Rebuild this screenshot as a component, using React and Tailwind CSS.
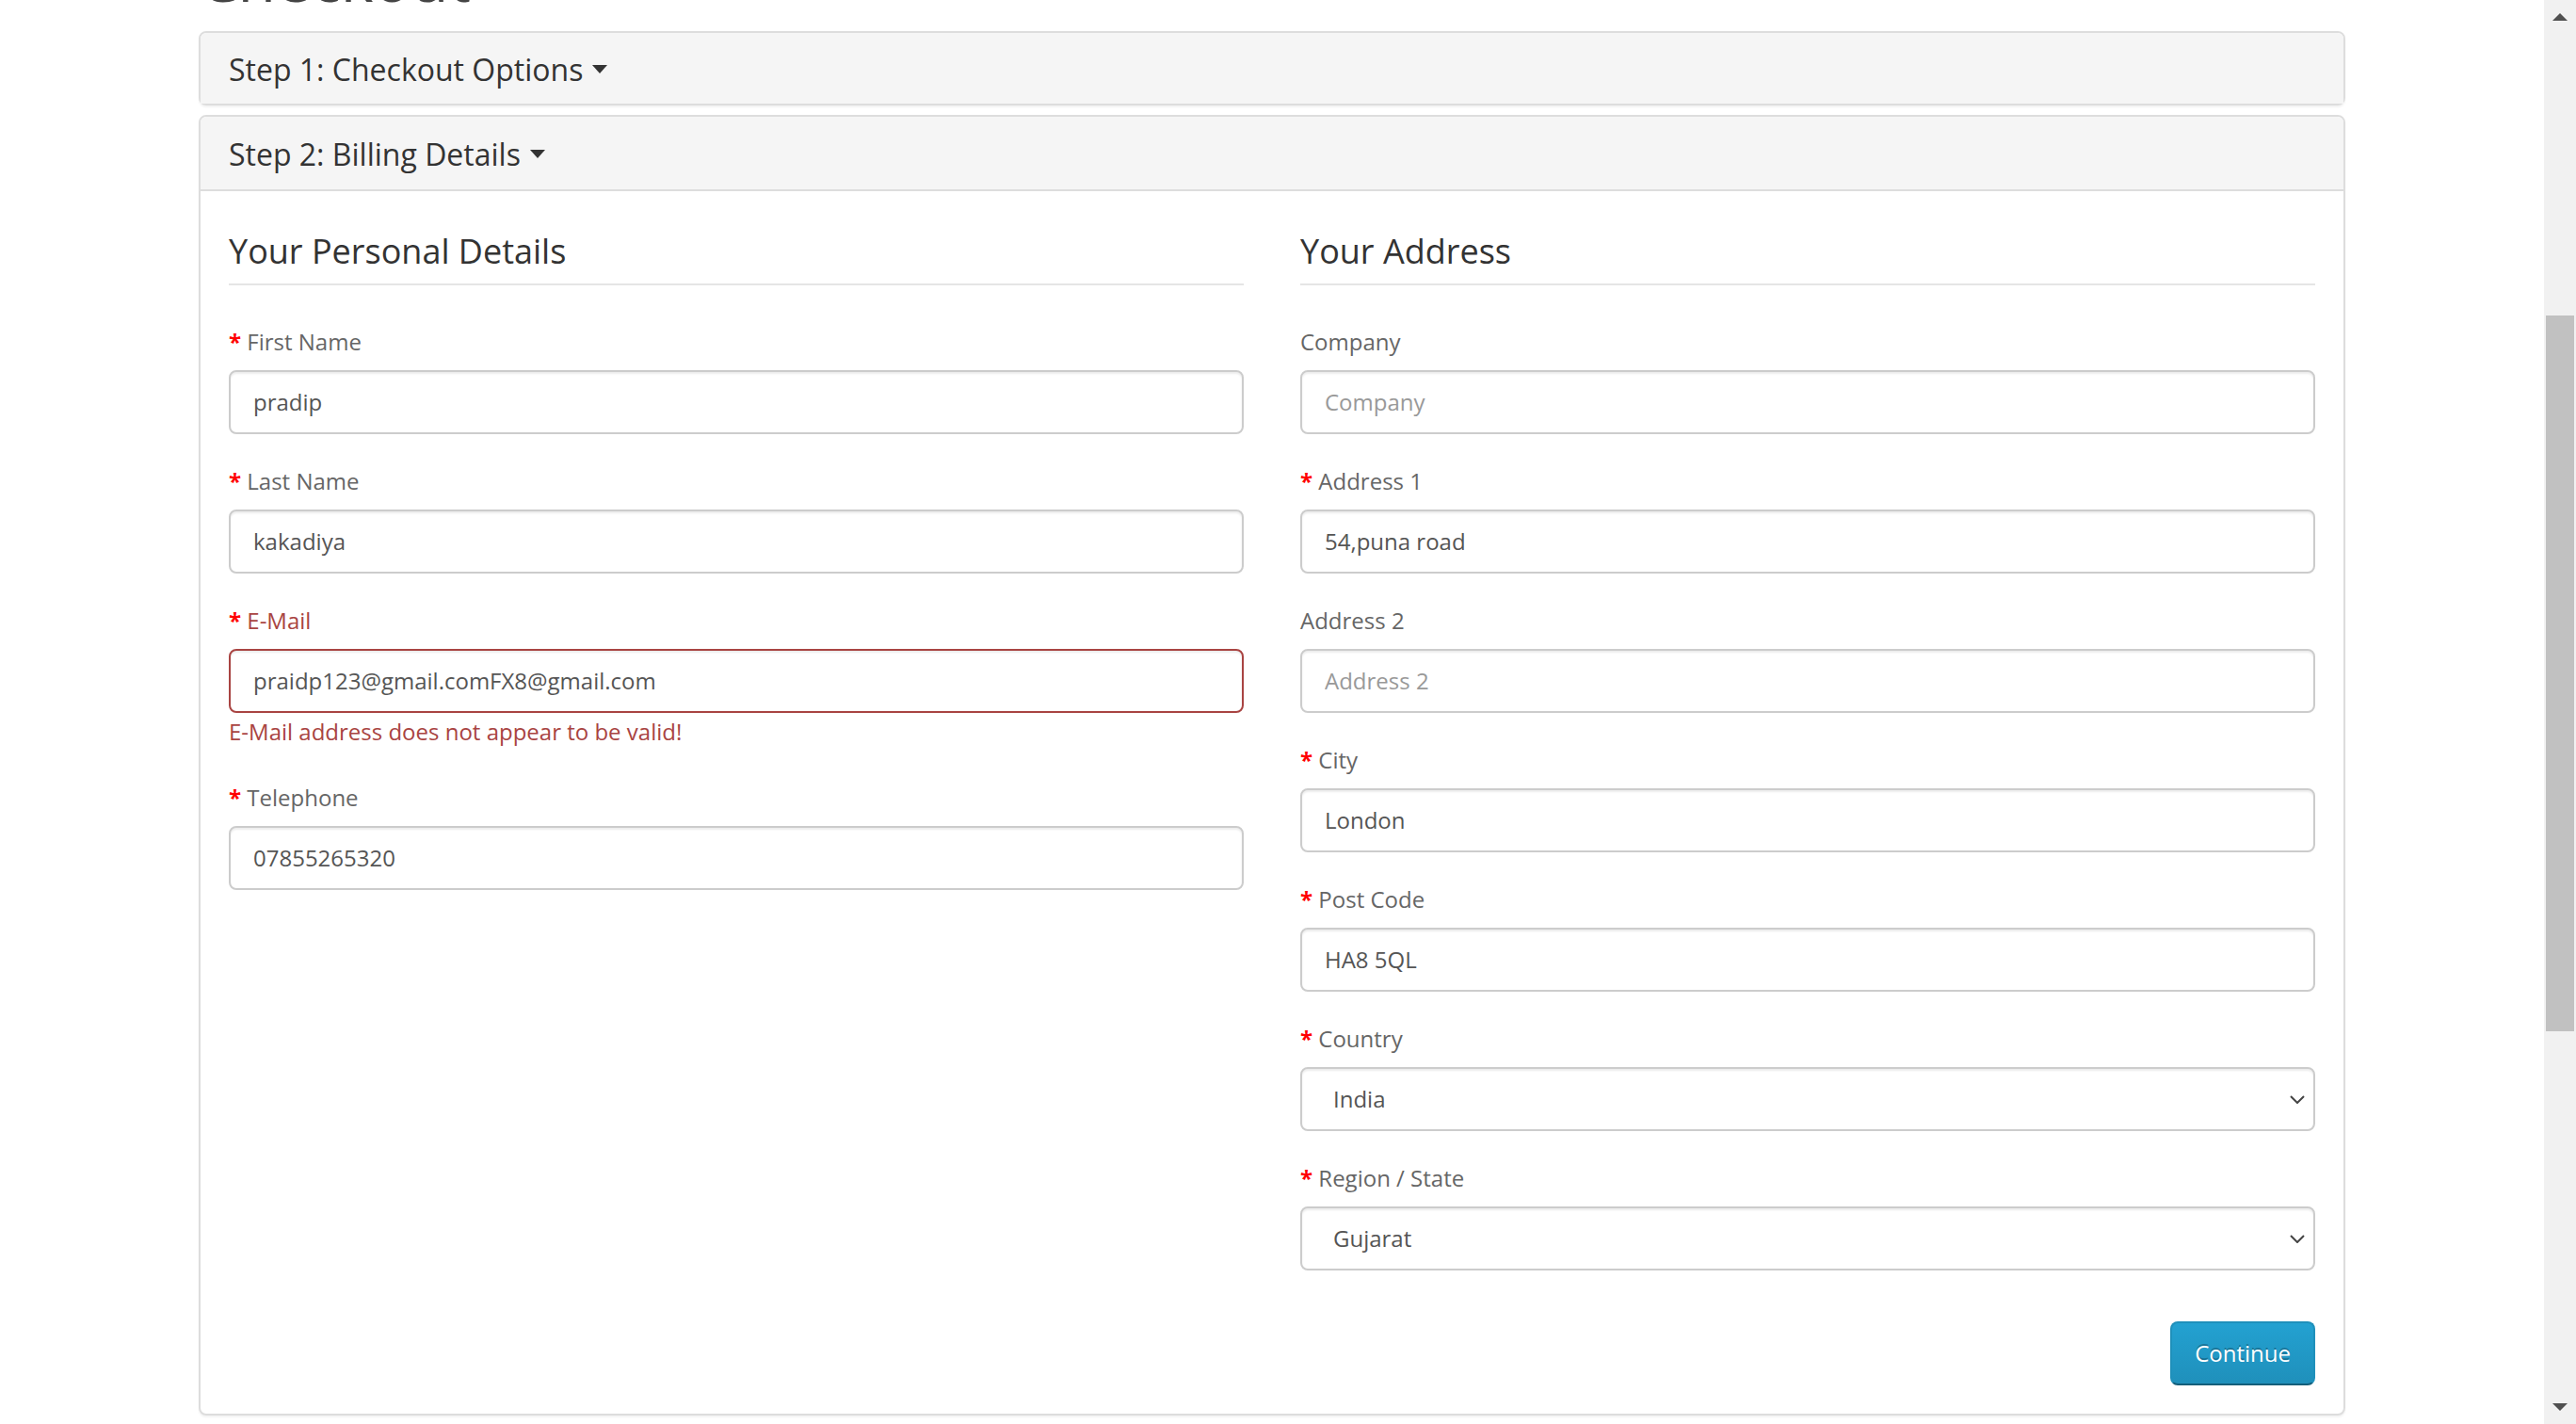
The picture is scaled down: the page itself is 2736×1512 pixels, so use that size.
import { useState } from 'react';

const personalFields = [
  { id: 'firstname', label: 'First Name', required: true, value: 'pradip' },
  { id: 'lastname', label: 'Last Name', required: true, value: 'kakadiya' },
  {
    id: 'email',
    label: 'E-Mail',
    required: true,
    value: 'praidp123@gmail.comFX8@gmail.com',
    error: 'E-Mail address does not appear to be valid!',
  },
  { id: 'telephone', label: 'Telephone', required: true, value: '07855265320' },
];

const addressFields = [
  { id: 'company', label: 'Company', placeholder: 'Company', value: '' },
  { id: 'address1', label: 'Address 1', required: true, value: '54,puna road' },
  { id: 'address2', label: 'Address 2', placeholder: 'Address 2', value: '' },
  { id: 'city', label: 'City', required: true, value: 'London' },
  { id: 'postcode', label: 'Post Code', required: true, value: 'HA8 5QL' },
  { id: 'country', label: 'Country', required: true, value: 'India', options: ['India', 'United Kingdom'] },
  { id: 'zone', label: 'Region / State', required: true, value: 'Gujarat', options: ['Gujarat', 'Maharashtra'] },
];

function Caret() {
  return (
    <svg width="16" height="9" viewBox="0 0 16 9" className="ml-[10px] inline-block">
      <path d="M0 0 H16 L8 9 Z" fill="#333" />
    </svg>
  );
}

function Field({ field, value, onChange }) {
  const hasError = !!field.error;
  const inputClass = `h-[68px] w-full rounded-[8px] border-2 bg-white text-[24px] text-[#555] shadow-[inset_0_2px_2px_rgba(0,0,0,0.075)] outline-none placeholder:text-[#999] ${
    hasError ? 'border-[#a94442]' : 'border-[#ccc]'
  }`;

  return (
    <div className="mb-[30px]">
      <label
        htmlFor={field.id}
        className={`mb-[10px] inline-block text-[24px] leading-[40px] ${hasError ? 'text-[#a94442]' : 'text-[#666]'}`}
      >
        {field.required && <span className="font-bold text-[#f00]">* </span>}
        {field.label}
      </label>
      {field.options ? (
        <div className="relative">
          <select
            id={field.id}
            value={value}
            onChange={e => onChange(field.id, e.target.value)}
            className={`${inputClass} appearance-none pl-[33px] pr-[40px]`}
          >
            {field.options.map(opt => (
              <option key={opt} value={opt}>
                {opt}
              </option>
            ))}
          </select>
          <svg
            width="16"
            height="9"
            viewBox="0 0 16 9"
            className="pointer-events-none absolute right-[11px] top-[30px]"
          >
            <path d="M1 1 L8 8 L15 1" fill="none" stroke="#444" strokeWidth="2" />
          </svg>
        </div>
      ) : (
        <input
          id={field.id}
          type="text"
          value={value}
          placeholder={field.placeholder}
          onChange={e => onChange(field.id, e.target.value)}
          className={`${inputClass} px-[24px]`}
        />
      )}
      {hasError && <div className="text-[24px] leading-[40px] text-[#a94442]">{field.error}</div>}
    </div>
  );
}

function Fieldset({ legend, fields, values, onChange }) {
  return (
    <fieldset>
      <legend className="mb-[40px] w-full border-b-2 border-[#e5e5e5] py-[14px] text-[36px] leading-[40px] text-[#333]">
        {legend}
      </legend>
      {fields.map(f => (
        <Field key={f.id} field={f} value={values[f.id]} onChange={onChange} />
      ))}
    </fieldset>
  );
}

function Scrollbar() {
  return (
    <div className="flex h-full w-[34px] flex-col bg-[#f1f1f1]">
      <div className="flex h-[36px] items-center justify-center">
        <svg width="16" height="8" viewBox="0 0 16 8">
          <path d="M0 8 L8 0 L16 8 Z" fill="#505050" />
        </svg>
      </div>
      <div className="h-[299px]" />
      <div className="mx-[2px] h-[760px] bg-[#c1c1c1]" />
      <div className="flex-1" />
      <div className="flex h-[36px] items-center justify-center">
        <svg width="16" height="8" viewBox="0 0 16 8">
          <path d="M0 0 L16 0 L8 8 Z" fill="#505050" />
        </svg>
      </div>
    </div>
  );
}

export default function App() {
  const initial = {};
  [...personalFields, ...addressFields].forEach(f => {
    initial[f.id] = f.value;
  });
  const [values, setValues] = useState(initial);

  const handleChange = (id, v) => {
    setValues(prev => ({ ...prev, [id]: v }));
  };

  return (
    <div className="flex h-screen w-full overflow-hidden bg-white font-['Open_Sans',sans-serif]">
      <main className="min-w-0 flex-1 overflow-hidden">
        <div className="mx-auto w-[2340px] px-[30px]">
          <h1 className="-mt-[60px] mb-[20px] text-[66px] leading-[1.1] text-[#444]">Checkout</h1>

          {/* Step 1 (collapsed) */}
          <div className="rounded-[8px] border-2 border-[#ddd] bg-white shadow-[0_2px_2px_rgba(0,0,0,0.05)]">
            <div className="flex h-[75px] items-center rounded-t-[6px] bg-[#f5f5f5] px-[30px] pt-[3px]">
              <h4 className="flex items-center text-[32px] leading-[1.1] text-[#333]">
                Step 1: Checkout Options
                <Caret />
              </h4>
            </div>
          </div>

          {/* Step 2 (open) */}
          <div className="mt-[10px] rounded-[8px] border-2 border-[#ddd] bg-white shadow-[0_2px_2px_rgba(0,0,0,0.05)]">
            <div className="flex h-[79px] items-center rounded-t-[6px] border-b-2 border-[#ddd] bg-[#f5f5f5] px-[30px] pt-[3px]">
              <h4 className="flex items-center text-[32px] leading-[1.1] text-[#333]">
                Step 2: Billing Details
                <Caret />
              </h4>
            </div>
            <div className="p-[30px]">
              <div className="grid grid-cols-2 gap-x-[60px]">
                <Fieldset legend="Your Personal Details" fields={personalFields} values={values} onChange={handleChange} />
                <Fieldset legend="Your Address" fields={addressFields} values={values} onChange={handleChange} />
              </div>
              <div className="mt-[24px] flex justify-end">
                <button
                  type="button"
                  className="h-[68px] rounded-[8px] border-2 border-[#1f90bb] border-b-[#145e7a] bg-gradient-to-b from-[#23a1d1] to-[#1f90bb] px-[24px] text-[24px] text-white [text-shadow:0_-2px_0_rgba(0,0,0,0.25)]"
                >
                  Continue
                </button>
              </div>
            </div>
          </div>
        </div>
      </main>
      <Scrollbar />
    </div>
  );
}
